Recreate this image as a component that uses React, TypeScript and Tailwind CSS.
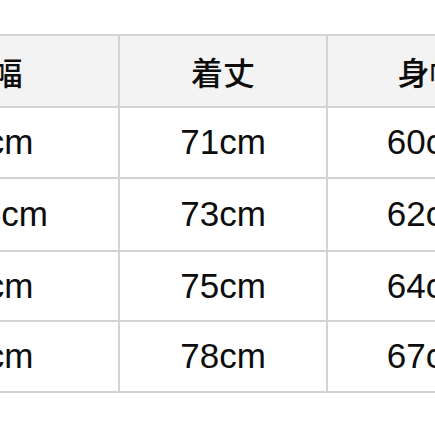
import React from 'react'

const rows = [
  ['48cm', '71cm', '60cm'],
  ['49.5cm', '73cm', '62cm'],
  ['51cm', '75cm', '64cm'],
  ['53cm', '78cm', '67cm'],
]

const rowHeights = ['h-[71px]', 'h-[73px]', 'h-[70px]', 'h-[71px]']

const App: React.FC = () => {
  return (
    <div className="w-[435px] h-[435px] overflow-hidden bg-white pt-[34px]">
      <div
        className="ml-[-137px] w-[668px] border-t-2 border-[#d3d3d3] text-[#0d0d0d]"
        style={{ fontFamily: '"Liberation Sans", "Noto Sans CJK JP", sans-serif' }}
      >
        {/* ヘッダー */}
        <div className="flex h-[72px] border-b-2 border-[#d3d3d3] bg-[#f3f3f3] text-[32px] font-medium">
          <div
            className="w-[257px] border-r-2 border-[#d3d3d3] flex items-center justify-center"
            style={{ fontFamily: '"Noto Sans CJK JP", sans-serif' }}
          >
            肩幅
          </div>
          <div
            className="w-[208px] border-r-2 border-[#d3d3d3] flex items-center justify-center"
            style={{ fontFamily: '"Noto Sans CJK JP", sans-serif' }}
          >
            着丈
          </div>
          <div
            className="w-[203px] flex items-center justify-center"
            style={{ fontFamily: '"Noto Sans CJK JP", sans-serif' }}
          >
            身幅
          </div>
        </div>

        {rows.map((r, i) => (
          <div key={i} className={`flex ${rowHeights[i]} border-b-2 border-[#d3d3d3] text-[35px]`}>
            <div className="w-[257px] border-r-2 border-[#d3d3d3] flex items-center justify-center">{r[0]}</div>
            <div className="w-[208px] border-r-2 border-[#d3d3d3] flex items-center justify-center">{r[1]}</div>
            <div className="w-[203px] flex items-center justify-center">{r[2]}</div>
          </div>
        ))}
      </div>
    </div>
  )
}

export default App
